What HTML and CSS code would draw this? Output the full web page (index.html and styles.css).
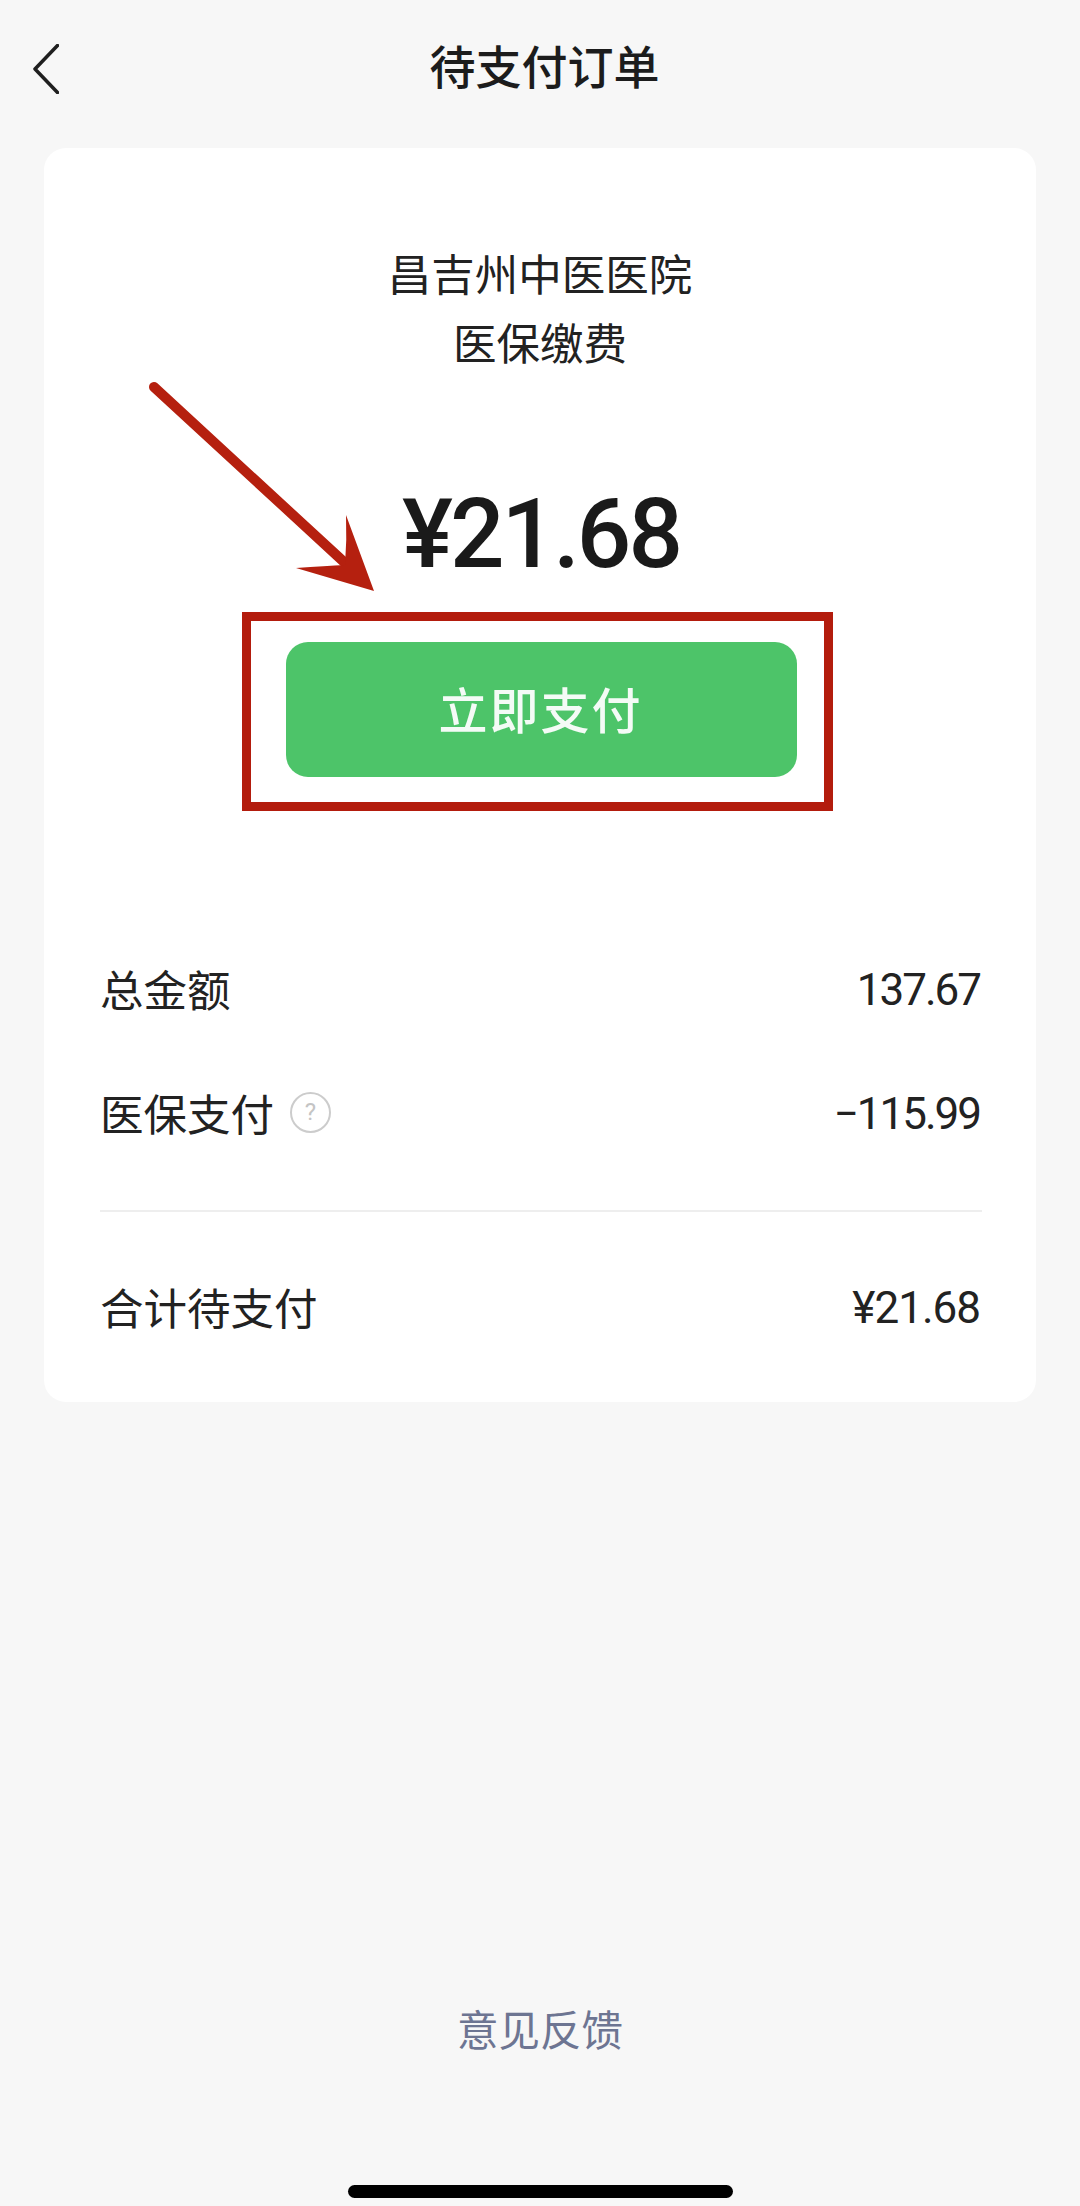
FILE: index.html
```html
<!DOCTYPE html>
<html lang="zh-CN">
<head>
<meta charset="utf-8">
<title>待支付订单</title>
<link rel="stylesheet" href="styles.css">
</head>
<body>
<div class="page">
  <header class="nav">
    <svg class="back" width="26" height="50" viewBox="0 0 26 50" aria-hidden="true"><path d="M24.5 1.5 2 25l22.5 23.5" fill="none" stroke="#1f1f1f" stroke-width="3.5" stroke-linecap="round" stroke-linejoin="round"/></svg>
    <h1 class="title">待支付订单</h1>
  </header>
  <main class="card">
    <div class="merchant">
      <div>昌吉州中医医院</div>
      <div>医保缴费</div>
    </div>
    <div class="amount">¥21.68</div>
    <div class="highlight">
      <button class="pay">立即支付</button>
    </div>
    <div class="rows">
      <div class="row"><span class="label">总金额</span><span class="value">137.67</span></div>
      <div class="row"><span class="label">医保支付<span class="help">?</span></span><span class="value">−115.99</span></div>
    </div>
    <div class="total">
      <div class="row"><span class="label">合计待支付</span><span class="value value-total">¥21.68</span></div>
    </div>
    <svg class="arrow" width="240" height="220" viewBox="140 380 240 220" aria-hidden="true">
      <path d="M154 387 L344 562" fill="none" stroke="#b5200f" stroke-width="10" stroke-linecap="round"/>
      <path d="M346 515 L374 591 L296 568 Q326 566 345 565 Q347 540 346 515Z" fill="#b5200f"/>
    </svg>
  </main>
  <footer class="foot">
    <a class="feedback">意见反馈</a>
    <div class="home"></div>
  </footer>
</div>
</body>
</html>
```
FILE: styles.css
```css
* { box-sizing: border-box; }
html, body { margin: 0; padding: 0; background: #f7f7f7; }
body { font-family: "Roboto", "Noto Sans CJK SC", sans-serif; color: #1c1c1c; }
.page { width: 1080px; height: 2206px; display: flex; flex-direction: column; }

.nav { height: 148px; padding-top: 44px; display: grid; grid-template-columns: 1fr auto 1fr; align-items: start; }
.back { margin-left: 33px; grid-column: 1; grid-row: 1; }
.title { grid-column: 2; grid-row: 1; margin: -5px 0 0 9px; font-size: 46px; line-height: 50px; font-weight: 500; font-family: "Noto Sans CJK SC", sans-serif; }

.card { position: relative; margin: 0 44px; height: 1254px; background: #fff; border-radius: 22px; padding: 0 56px; display: flex; flex-direction: column; }
.merchant { margin-top: 90px; font-size: 43.5px; line-height: 69px; text-align: center; font-family: "Noto Sans CJK SC", sans-serif; color: #222; }
.amount { margin: 103px 0 0 2px; font-size: 96px; line-height: 110px; font-weight: 500; letter-spacing: -3px; text-align: center; color: #1a1a1a; }
.highlight { align-self: center; margin: 23px 5px 0 0; width: 591px; height: 199px; border: 9px solid #b31c0d; padding: 21px 27px 25px 35px; }
.pay { display: block; width: 100%; height: 100%; padding: 0 2px 5px 0; border: 0; border-radius: 22px; background: #4dc469; color: #f4fbf6; font-family: "Noto Sans CJK SC", sans-serif; font-size: 49px; font-weight: 500; letter-spacing: 2px; }

.rows { margin: 147px -2px 0 0; display: flex; flex-direction: column; gap: 64px; padding: 0 2px 68px 0; border-bottom: 2px solid #eeeeee; }
.row { display: flex; justify-content: space-between; align-items: center; height: 60px; }
.label { display: flex; align-items: center; font-family: "Noto Sans CJK SC", sans-serif; font-size: 43.5px; color: #222; }
.value { padding-top: 4px; font-size: 44px; letter-spacing: -2px; color: #222; }
.value-total { letter-spacing: -1px; }
.help { margin-left: 16px; width: 41px; height: 41px; border: 2.5px solid #cccccc; border-radius: 50%; display: flex; align-items: center; justify-content: center; font-family: "Roboto", sans-serif; font-size: 24px; color: #c4c4c4; }
.total { margin-top: 64px; }

.arrow { position: absolute; left: 96px; top: 232px; }

.foot { flex: 1; display: flex; flex-direction: column; align-items: center; }
.feedback { margin-top: 596px; font-size: 41.5px; line-height: 60px; color: #6d7592; font-family: "Noto Sans CJK SC", sans-serif; }
.home { margin-top: 127px; width: 385px; height: 13px; border-radius: 7px; background: #000; }
```
